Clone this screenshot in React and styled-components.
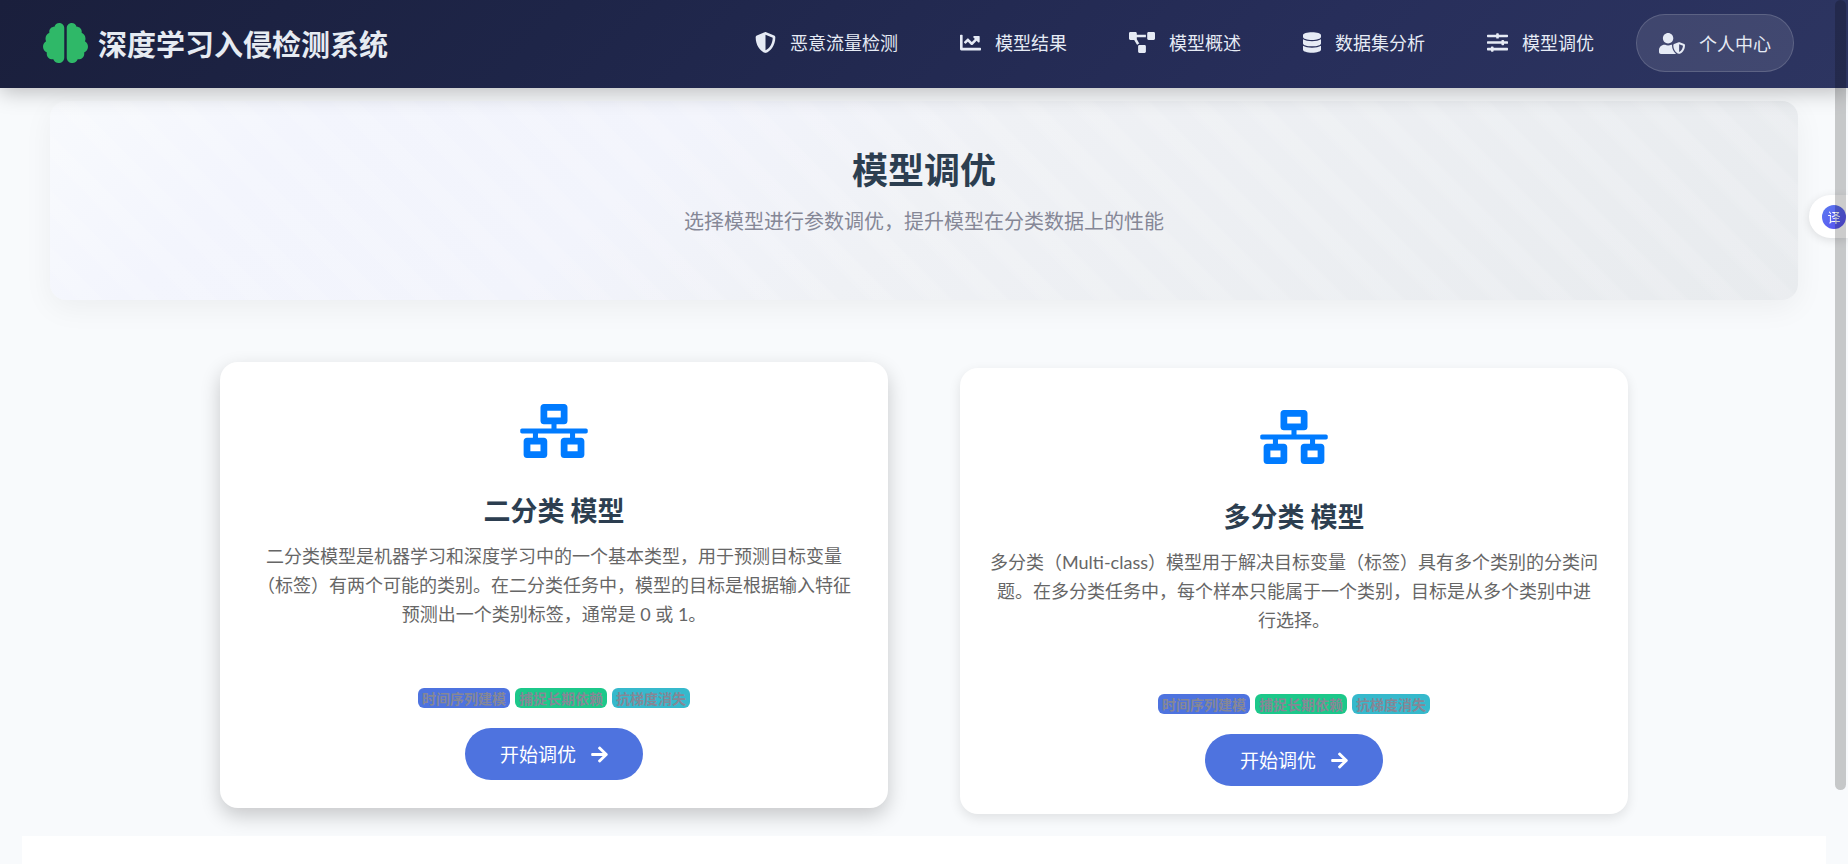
import React from 'react';
import styled, { createGlobalStyle, css } from 'styled-components';
import {
  FaArrowRight,
  FaBrain,
  FaChartLine,
  FaDatabase,
  FaNetworkWired,
  FaProjectDiagram,
  FaShieldAlt,
  FaSlidersH,
  FaUserShield,
} from 'react-icons/fa';

const GlobalStyle = createGlobalStyle`
  *, *::before, *::after {
    box-sizing: border-box;
  }

  body {
    margin: 0;
    background: #f8fafc;
    font-family: 'Noto Sans CJK SC', 'Noto Sans', sans-serif;
    color: #2c3e50;
  }
`;

const Page = styled.div`
  display: flex;
  flex-direction: column;
  height: 100vh;
  overflow: hidden;
`;

const Header = styled.header`
  display: flex;
  align-items: center;
  justify-content: space-between;
  flex-shrink: 0;
  height: 88px;
  padding: 0 54px 2px 43px;
  background: linear-gradient(135deg, #1a1f3c 0%, #1e2548 30%, #272e5a 70%, #2d3561 100%);
  box-shadow: 0 4px 20px rgba(0, 0, 0, 0.25);
  z-index: 2;
`;

const Brand = styled.a`
  display: flex;
  align-items: center;
  gap: 10px;
  color: #e6ebf2;
  font-size: 29px;
  font-weight: 700;
  line-height: 40px;
  text-decoration: none;

  svg {
    width: 45px;
    height: 40px;
    color: #2fb868;
  }
`;

const Nav = styled.nav`
  display: flex;
  align-items: center;
  gap: 22px;
`;

const NavLink = styled.a`
  display: flex;
  align-items: center;
  gap: 14px;
  padding: 0 20px 2px;
  color: #e6ebf5;
  font-size: 18px;
  line-height: 24px;
  text-decoration: none;
  white-space: nowrap;

  svg {
    flex-shrink: 0;
    width: ${props => props.$iconWidth}px;
    height: 21px;
  }

  ${props =>
    props.$pill &&
    css`
      height: 58px;
      padding: 0 22px;
      border: 1px solid rgba(255, 255, 255, 0.15);
      border-radius: 29px;
      background: rgba(255, 255, 255, 0.1);
    `}
`;

const Hero = styled.section`
  flex-shrink: 0;
  margin: 13px 50px 0;
  padding: 43px 24px 64px;
  border-radius: 16px;
  text-align: center;
  background:
    repeating-linear-gradient(45deg, transparent 0 16px, rgba(255, 255, 255, 0.12) 24px 36px, transparent 40px),
    linear-gradient(135deg, #f8fafd 0%, #f3f5fd 14%, #f2f4fc 34%, #eff1f5 50%, #e8ebee 100%);
  box-shadow: 0 8px 30px rgba(0, 0, 0, 0.05);
`;

const HeroTitle = styled.h1`
  margin: 0;
  font-size: 36px;
  font-weight: 700;
  line-height: 48px;
`;

const HeroText = styled.p`
  margin: 14px 0 0;
  color: #858796;
  font-size: 20px;
  line-height: 30px;
`;

const Cards = styled.main`
  display: grid;
  grid-template-columns: 1fr 1fr;
  flex-shrink: 0;
  gap: 72px;
  width: calc(100% - 48px);
  max-width: 1408px;
  margin: 68px auto 22px;
`;

const Card = styled.article`
  display: flex;
  flex-direction: column;
  align-items: center;
  padding: 42px 29px 28px;
  border-radius: 18px;
  background: #fff;
  text-align: center;
  box-shadow: 0 4px 12px rgba(0, 0, 0, 0.1);

  ${props =>
    props.$raised &&
    css`
      transform: translateY(-6px);
      box-shadow: 0 8px 20px rgba(0, 0, 0, 0.2);
    `}
`;

const CardIcon = styled(FaNetworkWired)`
  width: 68px;
  height: 54px;
  color: #007bff;
`;

const CardTitle = styled.h2`
  margin: 34px 0 0;
  font-size: 27px;
  font-weight: 700;
  line-height: 36px;
`;

const CardText = styled.p`
  margin: 14px 0 0;
  color: #666;
  font-family: Lato, 'Noto Sans CJK SC', sans-serif;
  font-size: 18px;
  line-height: 29px;
`;

const Badges = styled.div`
  display: flex;
  gap: 5px;
  margin: 59px 0 20px;
`;

const Badge = styled.span`
  padding: 0 4px;
  border-radius: 6px;
  background: ${props => props.$color};
  color: #858796;
  font-size: 14px;
  font-weight: 700;
  line-height: 20px;
`;

const StartButton = styled.button`
  display: flex;
  align-items: center;
  gap: 15px;
  height: 52px;
  padding: 0 35px;
  border: none;
  border-radius: 26px;
  background: #4e73df;
  color: #fff;
  font-family: inherit;
  font-size: 19px;
  line-height: 28px;

  svg {
    width: 17px;
    height: 19px;
  }
`;

const Panel = styled.section`
  flex: 1;
  margin: 0 22px;
  background: #fff;
`;

const Translate = styled.button`
  position: fixed;
  top: 195px;
  right: 0;
  z-index: 3;
  display: flex;
  align-items: center;
  width: 39px;
  height: 43px;
  padding: 0 0 0 13px;
  border: none;
  border-radius: 22px 0 0 22px;
  background: #fff;
  box-shadow: 0 2px 10px rgba(0, 0, 0, 0.12);
`;

const TranslateMark = styled.span`
  width: 24px;
  height: 24px;
  border-radius: 50%;
  background: linear-gradient(135deg, #5a7bf0, #5b4df0);
  color: #fff;
  font-family: 'Noto Sans CJK SC', sans-serif;
  font-size: 13px;
  line-height: 24px;
  text-align: center;
`;

const ScrollThumb = styled.div`
  position: fixed;
  top: 0;
  right: 2px;
  bottom: 74px;
  z-index: 4;
  width: 11px;
  border-radius: 6px;
  background: rgba(0, 0, 0, 0.2);
  pointer-events: none;
`;

const links = [
  { label: '恶意流量检测', icon: FaShieldAlt, iconWidth: 21 },
  { label: '模型结果', icon: FaChartLine, iconWidth: 21 },
  { label: '模型概述', icon: FaProjectDiagram, iconWidth: 26 },
  { label: '数据集分析', icon: FaDatabase, iconWidth: 18 },
  { label: '模型调优', icon: FaSlidersH, iconWidth: 21 },
  { label: '个人中心', icon: FaUserShield, iconWidth: 26, pill: true },
];

const badges = [
  { label: '时间序列建模', color: '#4e73df' },
  { label: '捕捉长期依赖', color: '#1cc88a' },
  { label: '抗梯度消失', color: '#36b9cc' },
];

const models = [
  {
    title: '二分类 模型',
    text:
      '二分类模型是机器学习和深度学习中的一个基本类型，用于预测目标变量（标签）有两个可能的类别。在二分类任务中，模型的目标是根据输入特征预测出一个类别标签，通常是 0 或 1。',
    raised: true,
  },
  {
    title: '多分类 模型',
    text:
      '多分类（Multi-class）模型用于解决目标变量（标签）具有多个类别的分类问题。在多分类任务中，每个样本只能属于一个类别，目标是从多个类别中进行选择。',
  },
];

const ModelCard = ({ title, text, raised }) => (
  <Card $raised={raised}>
    <CardIcon />
    <CardTitle>{title}</CardTitle>
    <CardText>{text}</CardText>
    <Badges>
      {badges.map(({ label, color }) => (
        <Badge key={label} $color={color}>{label}</Badge>
      ))}
    </Badges>
    <StartButton type="button">
      开始调优
      <FaArrowRight />
    </StartButton>
  </Card>
);

const App = () => (
  <>
    <GlobalStyle />
    <Page>
      <Header>
        <Brand href="#">
          <FaBrain />
          深度学习入侵检测系统
        </Brand>
        <Nav>
          {links.map(({ label, icon: Icon, iconWidth, pill }) => (
            <NavLink key={label} href="#" $iconWidth={iconWidth} $pill={pill}>
              <Icon />
              {label}
            </NavLink>
          ))}
        </Nav>
      </Header>
      <Hero>
        <HeroTitle>模型调优</HeroTitle>
        <HeroText>选择模型进行参数调优，提升模型在分类数据上的性能</HeroText>
      </Hero>
      <Cards>
        {models.map(model => (
          <ModelCard key={model.title} {...model} />
        ))}
      </Cards>
      <Panel />
    </Page>
    <Translate type="button" aria-label="翻译">
      <TranslateMark>译</TranslateMark>
    </Translate>
    <ScrollThumb />
  </>
);

export default App;
